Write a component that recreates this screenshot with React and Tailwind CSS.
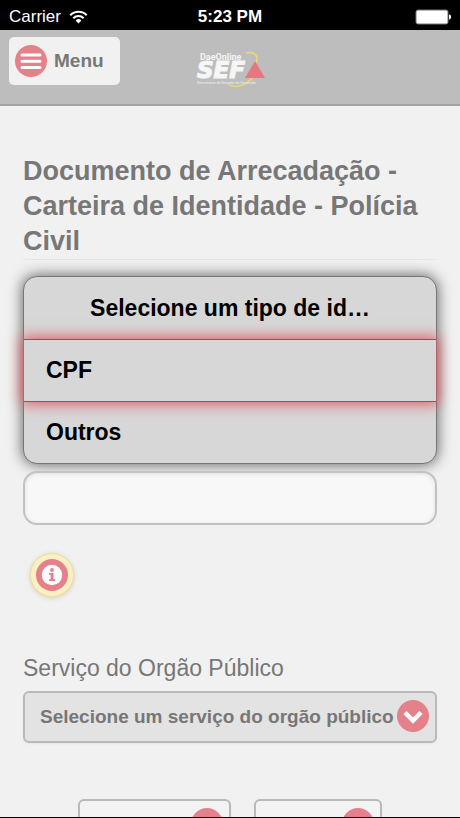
import { useState } from 'react';

const StatusBar = () => (
  <div className="grid grid-cols-3 items-center h-[30px] shrink-0 bg-black text-white text-[17px] leading-5 px-[9px] pt-[3px]">
    <div className="flex items-center gap-2">
      <span>Carrier</span>
      <svg className="w-[19px] h-[14px]" viewBox="0 0 19 14" fill="none" stroke="white" strokeWidth="2">
        <path d="M1.3 5.2a11.6 11.6 0 0 1 16.4 0" />
        <path d="M4.3 8.2a7.4 7.4 0 0 1 10.4 0" />
        <path d="M6.6 10.4a4.1 4.1 0 0 1 5.8 0L9.5 13.5z" fill="white" stroke="none" />
      </svg>
    </div>
    <span className="text-center font-bold">5:23 PM</span>
    <svg className="justify-self-end w-[36px] h-[16px]" viewBox="0 0 36 16">
      <rect x="1" y="1" width="32" height="14" rx="2" fill="white" stroke="#777" strokeWidth="1" />
      <path d="M34 5.5c1.6.3 2 1.2 2 2.5s-.4 2.2-2 2.5z" fill="white" />
    </svg>
  </div>
);

const Logo = () => (
  <svg
    className="w-[72px] h-[40px]"
    viewBox="-3 0 72 40"
    role="img"
    aria-label="DaeOnline SEF"
  >
    <path d="M49 3c6-1 10 0 11 4 .5 3-1 6-3 10" fill="none" stroke="#e9d873" strokeWidth="1.6" />
    <path d="M31 34c6 5 18 2 25-7" fill="none" stroke="#e9d873" strokeWidth="1.6" />
    <text x="3" y="10" fontSize="9" fontWeight="bold" fill="#f4f4f4" fontFamily="Roboto, sans-serif">
      DaeOnline
    </text>
    <text
      x="0"
      y="28"
      fontSize="23"
      fontWeight="bold"
      fontStyle="italic"
      fill="#f6f6f6"
      stroke="#f6f6f6"
      strokeWidth="1.2"
      fontFamily="'DejaVu Sans', sans-serif"
    >
      SEF
    </text>
    <text x="0" y="34" fontSize="4" fontWeight="bold" fill="#e2e2e2" fontFamily="Roboto, sans-serif">
      Secretaria de Estado de Fazenda
    </text>
    <path d="M58 11l10 17H48z" fill="#e5787f" />
  </svg>
);

const ChevronBadge = () => (
  <svg className="pointer-events-none absolute right-2 top-[9px] w-8 h-8" viewBox="0 0 32 32">
    <circle cx="16" cy="16" r="16" fill="#e5818a" />
    <path d="M8 12.5l8 8 8-8" fill="none" stroke="white" strokeWidth="4.5" />
  </svg>
);

const Select = ({ id, label, className, options }) => (
  <div className="relative">
    <select
      id={id}
      aria-label={label}
      className={`block h-[52px] appearance-none rounded-md border-2 border-[#b9b9b9] pl-[15px] text-[19px] font-bold text-[#777] shadow-xs ${className}`}
    >
      {options.map((option) => (
        <option key={option}>{option}</option>
      ))}
    </select>
    <ChevronBadge />
  </div>
);

const TypePicker = ({ value, onChange }) => (
  <div className="mt-4 rounded-[14px] border border-[#777] bg-[#d7d7d7] pt-px text-[23px] leading-[61px] font-bold text-black shadow-[0_0_14px_1px_#666]">
    <h2 className="truncate px-16 text-center">Selecione um tipo de id…</h2>
    {['CPF', 'Outros'].map((type) => (
      <button
        key={type}
        type="button"
        onClick={() => onChange(type)}
        className={`block w-full px-[22px] text-left ${
          value === type ? 'border-y border-[#85565b] bg-[#d7d7d7] shadow-[0_0_13px_2px_#dc5a64] relative' : ''
        }`}
      >
        {type}
      </button>
    ))}
  </div>
);

const App = () => {
  const [type, setType] = useState('CPF');

  return (
    <div className="flex flex-col h-screen overflow-hidden border-b border-black bg-[#f1f1f1] text-[#777] font-['Liberation_Sans',Arial,sans-serif]">
      <StatusBar />
      <header className="grid grid-cols-3 shrink-0 h-[76px] items-start border-b-2 border-[#a3a3a3] bg-[#bdbdbd] px-[9px] pt-[7px]">
        <button
          type="button"
          className="flex items-center gap-[7px] w-[111px] h-12 rounded-[5px] bg-[#f1f1f1] px-[6px] text-[19px] font-bold"
        >
          <svg className="w-8 h-8" viewBox="0 0 32 32">
            <circle cx="16" cy="16" r="16" fill="#e5818a" />
            <path d="M7 10h18M7 16.2h18M7 22.4h18" stroke="white" strokeWidth="3" strokeLinecap="round" />
          </svg>
          Menu
        </button>
        <div className="flex justify-center pt-[13px]">
          <Logo />
        </div>
      </header>

      <main className="px-[23px] pt-12">
        <h1 className="border-b border-[#e6e6e6] text-[27px] leading-[35px] font-bold">
          Documento de Arrecadação - Carteira de Identidade - Polícia Civil
        </h1>

        <TypePicker value={type} onChange={setType} />

        <input
          type="text"
          aria-label="Número de identificação"
          className="mt-[7px] block w-full h-[54px] rounded-[14px] border-2 border-[#c2c2c2] bg-[#f8f8f8] px-4 text-[19px] shadow-[inset_0_1px_4px_#ddd]"
        />

        <button
          type="button"
          aria-label="Informações"
          className="mt-7 ml-[7px] block rounded-full border border-[#ecdf9f] bg-[#faf0c4] p-[5px] shadow-[0_1px_5px_#d5cfb0]"
        >
          <svg className="w-8 h-8" viewBox="0 0 32 32">
            <circle cx="16" cy="16" r="16" fill="#e5818a" />
            <circle cx="16" cy="16" r="10.2" fill="white" />
            <circle cx="16" cy="11" r="1.9" fill="#e5818a" />
            <path d="M13 14h4.6v6.2h1.6v1.8H13v-1.8h1.6v-4.4H13z" fill="#e5818a" />
          </svg>
        </button>

        <label htmlFor="service" className="mt-14 mb-2 block text-[23px] leading-[30px]">
          Serviço do Orgão Público
        </label>
        <Select
          id="service"
          className="w-full bg-[#e3e3e3] pr-[34px]"
          options={['Selecione um serviço do orgão público']}
        />

        <div className="mt-14 flex justify-center gap-[23px]">
          <Select id="month" label="Mês" className="w-[153px] bg-[#f3f3f3]" options={['Mês']} />
          <Select id="year" label="Ano" className="w-[128px] bg-[#f3f3f3]" options={['Ano']} />
        </div>
      </main>
    </div>
  );
};

export default App;
